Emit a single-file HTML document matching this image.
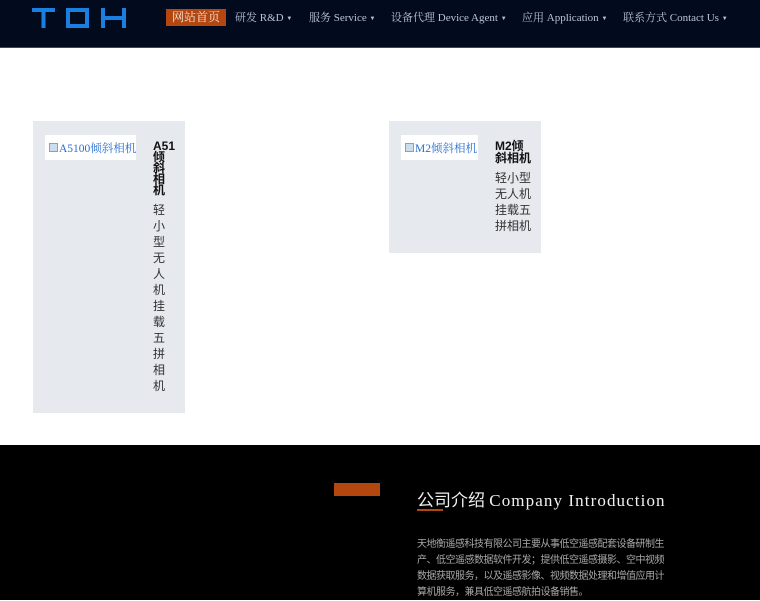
<!DOCTYPE html>
<html><head><meta charset="utf-8"><style>
*{margin:0;padding:0;box-sizing:border-box}
body{width:760px;height:600px;overflow:hidden;background:#fff;font-family:"Liberation Serif","Noto Serif CJK SC",serif;position:relative}
.nav{position:absolute;left:0;top:0;width:760px;height:48px;background:#020b1d;border-bottom:1px solid #3a4a66}
.nav span{position:absolute;top:10px;font-size:11px;color:#b8c4d6;white-space:nowrap;line-height:16px}
.nav .c{font-size:6px;vertical-align:1px}
.home{left:166px;top:9px!important;width:60px;height:17px;background:#b4470f;color:#f3e6dc!important;text-align:center;line-height:17px!important;font-size:12px!important}
.card{position:absolute;background:#e6e9ee}
.img{position:absolute;background:#fff;font-size:11.5px;color:#2a6fd0;padding:5px 4px 0 4px;white-space:nowrap;overflow:hidden}
.img i{display:inline-block;width:9px;height:9px;border:1px solid #8a8;background:#cde;margin-right:1px;vertical-align:0}
.t{position:absolute;font-family:"Liberation Sans","Noto Sans CJK SC",sans-serif;font-weight:bold;font-size:12px;line-height:11px;color:#111}
.d{position:absolute;font-family:"Liberation Sans","Noto Sans CJK SC",sans-serif;font-size:12px;line-height:16px;color:#333}
.foot{position:absolute;left:0;top:445px;width:760px;height:155px;background:#000}
</style></head><body>
<div class="nav">
<svg style="position:absolute;left:32px;top:8px" width="94" height="20" viewBox="0 0 94 20">
<g fill="#1a7fe0">
<rect x="0" y="0" width="23" height="4"/><rect x="9.5" y="0" width="4" height="20"/>
<rect x="34" y="0" width="23" height="4"/><rect x="34" y="16" width="23" height="4"/><rect x="34" y="0" width="4" height="20"/><rect x="53" y="0" width="4" height="20"/>
<rect x="69" y="0" width="4" height="20"/><rect x="90" y="0" width="4" height="20"/><rect x="69" y="8" width="25" height="4"/>
</g></svg>
<span class="home">网站首页</span>
<span style="left:235px">研发 R&amp;D <b class="c">▼</b></span>
<span style="left:309px">服务 Service <b class="c">▼</b></span>
<span style="left:391px">设备代理 Device Agent <b class="c">▼</b></span>
<span style="left:522px">应用 Application <b class="c">▼</b></span>
<span style="left:623px">联系方式 Contact Us <b class="c">▼</b></span>
</div>

<div class="card" style="left:33px;top:121px;width:152px;height:292px">
<div class="img" style="left:12px;top:14px;width:91px;height:25px"><i></i>A5100倾斜相机</div>
<div class="t" style="left:120px;top:20px;width:22px">A51<br>倾<br>斜<br>相<br>机</div>
<div class="d" style="left:120px;top:81px;width:14px">轻<br>小<br>型<br>无<br>人<br>机<br>挂<br>载<br>五<br>拼<br>相<br>机</div>
</div>

<div class="card" style="left:389px;top:121px;width:152px;height:132px">
<div class="img" style="left:12px;top:14px;width:77px;height:25px"><i></i>M2倾斜相机</div>
<div class="t" style="left:106px;top:19px;width:40px;line-height:12px">M2倾<br>斜相机</div>
<div class="d" style="left:106px;top:49px;width:40px">轻小型<br>无人机<br>挂载五<br>拼相机</div>
</div>

<div class="foot">
<div style="position:absolute;left:334px;top:38px;width:46px;height:13px;background:#b4470f"></div>
<div style="position:absolute;left:417px;top:41px;font-size:17px;color:#f0f0f0;white-space:nowrap"><span style="font-family:'Liberation Sans','Noto Sans CJK SC',sans-serif">公司介绍</span> <span style="letter-spacing:1.1px">Company Introduction</span></div>
<div style="position:absolute;left:417px;top:64px;width:26px;height:2px;background:#b4470f"></div>
<div style="position:absolute;left:417px;top:92px;width:252px;font-size:10px;letter-spacing:-0.5px;line-height:16px;color:#a8a8a8;font-family:'Liberation Sans','Noto Sans CJK SC',sans-serif">天地衡遥感科技有限公司主要从事低空遥感配套设备研制生产、低空遥感数据软件开发；提供低空遥感摄影、空中视频数据获取服务，以及遥感影像、视频数据处理和增值应用计算机服务，兼具低空遥感航拍设备销售。</div>
</div>
</body></html>
